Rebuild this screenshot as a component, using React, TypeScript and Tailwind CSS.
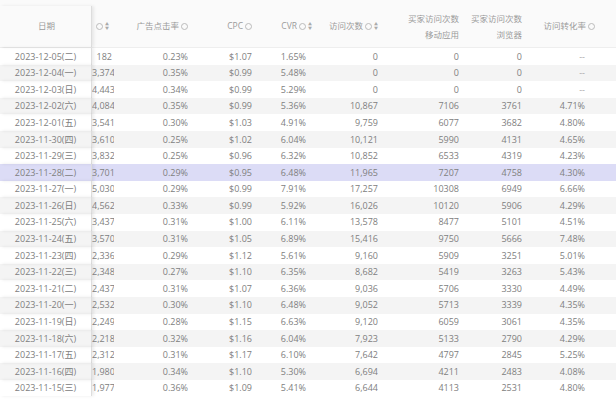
const rows: string[][] = [
  ['2023-12-05(二)', '182', '0.23%', '$1.07', '1.65%', '0', '0', '0', '--'],
  ['2023-12-04(一)', '3,374', '0.35%', '$0.99', '5.48%', '0', '0', '0', '--'],
  ['2023-12-03(日)', '4,443', '0.34%', '$0.99', '5.29%', '0', '0', '0', '--'],
  ['2023-12-02(六)', '4,084', '0.35%', '$0.99', '5.36%', '10,867', '7106', '3761', '4.71%'],
  ['2023-12-01(五)', '3,541', '0.30%', '$1.03', '4.91%', '9,759', '6077', '3682', '4.80%'],
  ['2023-11-30(四)', '3,610', '0.25%', '$1.02', '6.04%', '10,121', '5990', '4131', '4.65%'],
  ['2023-11-29(三)', '3,832', '0.25%', '$0.96', '6.32%', '10,852', '6533', '4319', '4.23%'],
  ['2023-11-28(二)', '3,701', '0.29%', '$0.95', '6.48%', '11,965', '7207', '4758', '4.30%'],
  ['2023-11-27(一)', '5,030', '0.29%', '$0.99', '7.91%', '17,257', '10308', '6949', '6.66%'],
  ['2023-11-26(日)', '4,562', '0.33%', '$0.99', '5.92%', '16,026', '10120', '5906', '4.29%'],
  ['2023-11-25(六)', '3,437', '0.31%', '$1.00', '6.11%', '13,578', '8477', '5101', '4.51%'],
  ['2023-11-24(五)', '3,570', '0.31%', '$1.05', '6.89%', '15,416', '9750', '5666', '7.48%'],
  ['2023-11-23(四)', '2,336', '0.29%', '$1.12', '5.61%', '9,160', '5909', '3251', '5.01%'],
  ['2023-11-22(三)', '2,348', '0.27%', '$1.10', '6.35%', '8,682', '5419', '3263', '5.43%'],
  ['2023-11-21(二)', '2,437', '0.31%', '$1.07', '6.36%', '9,036', '5706', '3330', '4.49%'],
  ['2023-11-20(一)', '2,532', '0.30%', '$1.10', '6.48%', '9,052', '5713', '3339', '4.35%'],
  ['2023-11-19(日)', '2,249', '0.28%', '$1.15', '6.63%', '9,120', '6059', '3061', '4.35%'],
  ['2023-11-18(六)', '2,218', '0.32%', '$1.16', '6.04%', '7,923', '5133', '2790', '4.29%'],
  ['2023-11-17(五)', '2,312', '0.31%', '$1.17', '6.10%', '7,642', '4797', '2845', '5.25%'],
  ['2023-11-16(四)', '1,980', '0.34%', '$1.10', '5.30%', '6,694', '4211', '2483', '4.08%'],
  ['2023-11-15(三)', '1,977', '0.36%', '$1.09', '5.41%', '6,644', '4113', '2531', '4.80%'],
]

const cols = 'grid grid-cols-[92px_22px_74px_64px_60px_66px_81px_63px_77px]'

function Info() {
  return <span className="inline-block w-[7px] h-[7px] rounded-full border border-[#bbb] ml-[2px] align-middle" />
}
function Sort() {
  return <span className="inline-flex flex-col ml-[2px] align-middle text-[4px] leading-[4px] text-[#aaa]"><span>▲</span><span>▼</span></span>
}

export default function App() {
  return (
    <div className="w-[616px] h-[406px] bg-white overflow-hidden text-[#808080] text-[9px]" style={{ fontFamily: '"Open Sans","Noto Sans CJK SC",sans-serif' }}>
      <div className={`${cols} h-[48px] pt-[6px] items-center text-[#9a9a9a] text-[8.5px] bg-[#fafafa] border-b border-[#eee]`}>
        <div className="text-center pl-[2px] border-r border-[#ddd] h-full flex items-center justify-center shadow-[2px_0_3px_rgba(0,0,0,0.08)]">日期</div>
        <div className="pl-[2px] whitespace-nowrap overflow-hidden"><Info /><Sort /></div>
        <div className="text-right whitespace-nowrap">广告点击率<Info /></div>
        <div className="text-right whitespace-nowrap">CPC<Info /></div>
        <div className="text-right whitespace-nowrap">CVR<Info /><Sort /></div>
        <div className="text-right whitespace-nowrap">访问次数<Info /><Sort /></div>
        <div className="text-right leading-[16px]">买家访问次数<br />移动应用</div>
        <div className="text-right leading-[16px]">买家访问次数<br />浏览器</div>
        <div className="text-right pr-[4px] whitespace-nowrap">访问转化率<Info /></div>
      </div>
      {rows.map((r, i) => (
        <div key={r[0]} className={`${cols} h-[16.6px] items-center ${r[0].startsWith('2023-11-28') ? 'bg-[#dcdcf6]' : i % 2 ? 'bg-[#f4f4f4]' : 'bg-white'}`}>
          <div className="text-center h-full flex items-center justify-center border-r border-[#ddd] shadow-[2px_0_3px_rgba(0,0,0,0.08)]">{r[0]}</div>
          {r.slice(1).map((c, j) => (
            <div key={j} className={`text-right whitespace-nowrap overflow-hidden ${j === 0 ? 'pr-[2px]' : j === 3 ? 'pr-[6px]' : j === 7 ? 'pr-[14px]' : ''} ${c === '--' ? 'text-[#aaa]' : ''}`}>{c}</div>
          ))}
        </div>
      ))}
    </div>
  )
}
